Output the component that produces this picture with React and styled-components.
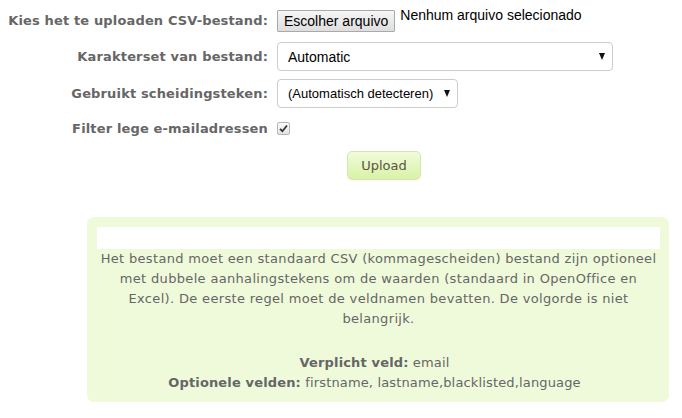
import React from 'react';
import styled, { createGlobalStyle } from 'styled-components';

const GlobalStyle = createGlobalStyle`
  html, body {
    margin: 0;
    padding: 0;
    background: #fff;
  }
  body {
    font-family: "DejaVu Sans", Verdana, sans-serif;
    font-size: 13px;
    color: #666;
  }
`;

const Page = styled.div`
  width: 682px;
  padding-top: 10px;
`;

const Form = styled.form`
  display: grid;
  grid-template-columns: 268px 1fr;
  column-gap: 9px;
  row-gap: 8px;
  align-items: center;
`;

const Label = styled.label`
  text-align: right;
  font-weight: bold;
  font-size: 13px;
  letter-spacing: 0.15px;
  color: #666;
  white-space: nowrap;
  align-self: ${p => (p.$top ? 'start' : 'center')};
  padding-top: ${p => (p.$top ? '3px' : '0')};
`;

const Control = styled.div`
  display: flex;
  align-items: ${p => (p.$top ? 'flex-start' : 'center')};
  min-height: ${p => p.$h || 22}px;
`;

const FileButton = styled.button`
  font-family: "Liberation Sans", Arial, sans-serif;
  font-size: 14px;
  color: #000;
  height: 22px;
  padding: 0 6px;
  background: linear-gradient(#f6f6f6, #dedede);
  border: 1px solid #a9a9a9;
  border-radius: 1px;
`;

const FileText = styled.span`
  font-family: "Liberation Sans", Arial, sans-serif;
  font-size: 14px;
  color: #000;
  margin-left: 5px;
  margin-top: -3px;
`;

const Select = styled.div`
  box-sizing: border-box;
  width: ${p => p.$w}px;
  height: 29px;
  display: flex;
  align-items: center;
  justify-content: space-between;
  padding: 0 7px 0 10px;
  border: 1px solid #ccc;
  border-radius: 4px;
  background: #fff;
  font-family: "Liberation Sans", Arial, sans-serif;
  font-size: ${p => p.$fs || 14}px;
  color: #000;
  white-space: nowrap;
`;

const Caret = styled.span`
  width: 0;
  height: 0;
  border-left: 3.5px solid transparent;
  border-right: 3.5px solid transparent;
  border-top: 7px solid #111;
  margin-left: 6px;
`;

const Check = styled.span`
  box-sizing: border-box;
  width: 13px;
  height: 13px;
  border: 1px solid #b5b5b5;
  border-radius: 2px;
  background: linear-gradient(#fcfcfc, #e3e3e3);
  display: flex;
  align-items: center;
  justify-content: center;
`;

const ButtonRow = styled.div`
  padding: 10px 0 0 347px;
`;

const UploadButton = styled.button`
  font-family: "DejaVu Sans", Verdana, sans-serif;
  font-size: 13px;
  color: #5b5346;
  width: 74px;
  height: 29px;
  padding: 0;
  background: linear-gradient(#f1fbdc, #d9f2a6);
  border: 1px solid #d2e8ae;
  border-radius: 5px;
`;

const InfoBox = styled.div`
  margin: 37px 0 0 87px;
  width: 582px;
  box-sizing: border-box;
  background: #effadb;
  border-radius: 7px;
  padding: 10px 9px 9px 10px;
  text-align: center;
  line-height: 20px;
  font-size: 13px;
  color: #666;
`;

const WhiteBar = styled.div`
  height: 22px;
  background: #fff;
`;

const Paragraph = styled.p`
  margin: 0 0 24px;
  padding: 0 2px;
  letter-spacing: 0.33px;
`;

const FieldLine = styled.div`
  letter-spacing: 0.15px;
  padding-right: 8px;
  b {
    color: #666;
  }
`;

export default function App() {
  return (
    <Page>
      <GlobalStyle />
      <Form>
        <Label $top>Kies het te uploaden CSV-bestand:</Label>
        <Control $h={24} $top>
          <FileButton type="button">Escolher arquivo</FileButton>
          <FileText>Nenhum arquivo selecionado</FileText>
        </Control>

        <Label>Karakterset van bestand:</Label>
        <Control $h={29}>
          <Select $w={336}>
            <span>Automatic</span>
            <Caret />
          </Select>
        </Control>

        <Label>Gebruikt scheidingsteken:</Label>
        <Control $h={29}>
          <Select $w={181} $fs={13}>
            <span>(Automatisch detecteren)</span>
            <Caret />
          </Select>
        </Control>

        <Label>Filter lege e-mailadressen</Label>
        <Control $h={25}>
          <Check>
            <svg width="9" height="9" viewBox="0 0 9 9">
              <path d="M1 4.8 L3.4 7.2 L8 1.5" fill="none" stroke="#333" strokeWidth="1.8" />
            </svg>
          </Check>
        </Control>
      </Form>

      <ButtonRow>
        <UploadButton type="button">Upload</UploadButton>
      </ButtonRow>

      <InfoBox>
        <WhiteBar />
        <Paragraph>
          Het bestand moet een standaard CSV (kommagescheiden) bestand zijn optioneel met dubbele
          aanhalingstekens om de waarden (standaard in OpenOffice en Excel). De eerste regel moet de
          veldnamen bevatten. De volgorde is niet belangrijk.
        </Paragraph>
        <FieldLine>
          <b>Verplicht veld:</b> email
        </FieldLine>
        <FieldLine>
          <b>Optionele velden:</b> firstname, lastname,blacklisted,language
        </FieldLine>
      </InfoBox>
    </Page>
  );
}
